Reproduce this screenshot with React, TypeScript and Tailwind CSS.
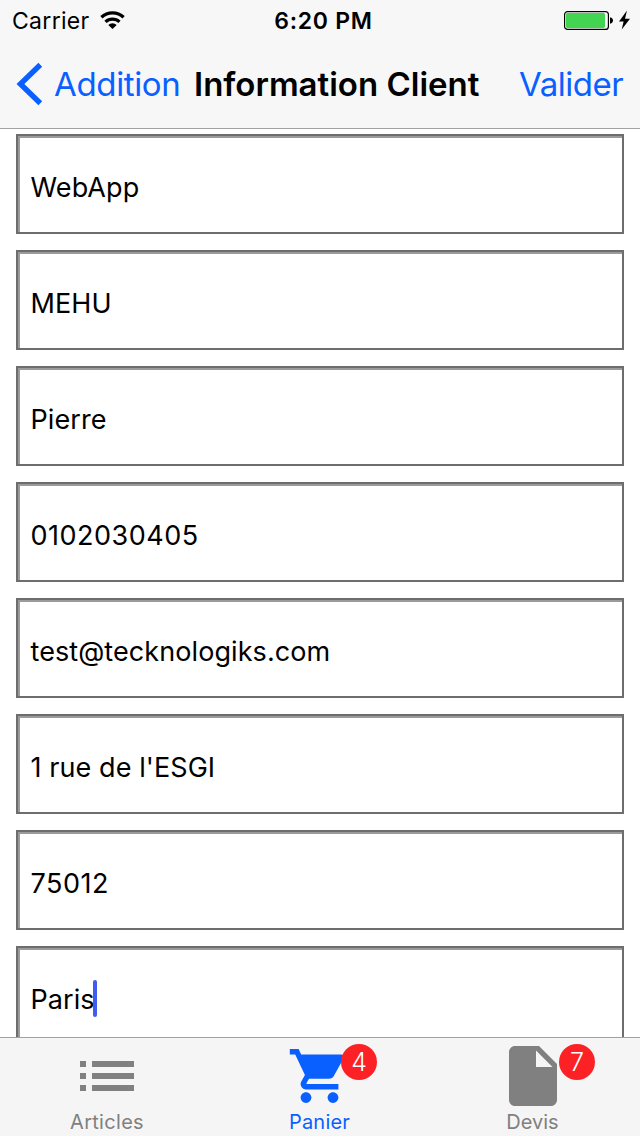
const fields = [
  'WebApp',
  'MEHU',
  'Pierre',
  '0102030405',
  'test@tecknologiks.com',
  "1 rue de l'ESGI",
  '75012',
  'Paris',
];

function StatusBar() {
  return (
    <div className="grid h-10 grid-cols-3 items-center">
      <div className="flex items-center pl-3">
        <span className="pt-0.5 text-[23px] leading-[38px] tracking-[0.3px]">Carrier</span>
        <svg className="ml-[10px]" width="25" height="18" viewBox="0 0 25 18">
          <path d="M.3 5.1a17.5 17.5 0 0 1 24.4 0l-2.2 2.4a14.3 14.3 0 0 0-20 0z" />
          <path d="M4.4 9.8a11.6 11.6 0 0 1 16.2 0l-2.2 2.3a8.4 8.4 0 0 0-11.8 0z" />
          <path d="M8.3 13.9a6.1 6.1 0 0 1 8.4 0L12.5 18z" />
        </svg>
      </div>
      <div className="pl-[7px] pt-0.5 text-center text-[23px] font-semibold leading-[38px] tracking-[0.7px]">6:20 PM</div>
      <div className="flex justify-end pr-[9px]">
        <svg width="67" height="20" viewBox="0 0 67 20">
          <rect x="0.6" y="1.6" width="43.8" height="17.8" rx="3" fill="#fff" stroke="#000" strokeWidth="1.2" />
          <rect x="2" y="3" width="39" height="15" rx="1.4" fill="#43d551" />
          <path d="M46 7.3c4 .4 4 6.1 0 6.5z" fill="#000" />
          <path d="M63 .5 55 11.5h4.6L57.7 19.5 66 8.8h-5z" fill="#000" />
        </svg>
      </div>
    </div>
  );
}

function NavBar() {
  return (
    <div className="flex h-[88px] items-center whitespace-nowrap">
      <svg className="ml-4" width="27" height="44" viewBox="0 0 27 44" fill="none">
        <path d="M24.3 2.7 4.4 22l19.9 19.3" stroke="#0a60ff" strokeWidth="5.4" />
      </svg>
      <span className="ml-[11px] w-[140px] text-[33px] leading-10 tracking-[-0.35px] text-[#0a60ff]">Addition</span>
      <span className="w-[325px] text-[33px] font-semibold leading-10 tracking-[0px]">Information Client</span>
      <span className="text-[33px] leading-10 tracking-[-0.45px] text-[#0a60ff]">Valider</span>
    </div>
  );
}

function Field({ value, focused }: { value: string; focused: boolean }) {
  const numeric = /^\d+$/.test(value);
  return (
    <div className="h-[100px] shrink-0 border-2 border-[#6d6d6d]">
      <div className="flex h-full items-center border-l-2 border-t-2 border-[#9b9b9b] pl-[10.5px] pt-1">
        <span className={numeric ? 'pt-0.5 text-[27px] leading-9 tracking-[0.5px]' : 'pt-0.5 text-[27px] leading-9 tracking-[0.08px]'}>
          {value}
        </span>
        {focused && <span className="-ml-[2px] mb-0.5 h-[37px] w-1 rounded-full bg-[#405bee]" />}
      </div>
    </div>
  );
}

function Badge({ count, position }: { count: number; position: string }) {
  return (
    <span
      className={`absolute top-[6px] flex size-9 items-center justify-center rounded-full bg-[#fc2125] text-[25px] font-light text-white ${position}`}
    >
      {count}
    </span>
  );
}

function TabBar() {
  return (
    <nav className="flex h-[99px] shrink-0 border-t border-[#a2a2a2] bg-[#f5f5f5] text-[20px] leading-6 text-[#808080]">
      <div className="flex w-[213px] flex-col items-center">
        <svg className="h-[72px]" width="54" height="72" viewBox="0 0 54 72" fill="#808080">
          <path d="M0 23h6v6H0zM12 23h42v6H12zM0 35h6v6H0zM12 35h42v6H12zM0 47h6v6H0zM12 47h42v6H12z" />
        </svg>
        <span className="pl-px tracking-[0.3px]">Articles</span>
      </div>
      <div className="relative flex w-[213px] flex-col items-center text-[#0a60ff]">
        <svg className="h-[72px]" width="65" height="72" viewBox="0 -2.07 24 26.67" fill="#0a60ff">
          <path d="M7 18c-1.1 0-1.99.9-1.99 2S5.9 22 7 22s2-.9 2-2-.9-2-2-2zM1 2v2h2l3.6 7.59-1.35 2.45c-.16.28-.25.61-.25.96 0 1.1.9 2 2 2h12v-2H7.42c-.14 0-.25-.11-.25-.25l.03-.12.9-1.63h7.45c.75 0 1.41-.41 1.75-1.03l3.58-6.49c.08-.14.12-.31.12-.48 0-.55-.45-1-1-1H5.21l-.94-2H1zm16 16c-1.1 0-1.99.9-1.99 2s.89 2 1.99 2 2-.9 2-2-.9-2-2-2z" />
        </svg>
        <span className="tracking-[0.2px]">Panier</span>
        <Badge count={4} position="left-[128px]" />
      </div>
      <div className="relative flex w-[213px] flex-col items-center">
        <svg width="72" height="72" viewBox="0 -0.67 24 24" fill="#808080">
          <path d="M6 2c-1.1 0-1.99.9-1.99 2L4 20c0 1.1.89 2 1.99 2H18c1.1 0 2-.9 2-2V8l-6-6H6zm7 7V3.5L18.5 9H13z" />
        </svg>
        <span>Devis</span>
        <Badge count={7} position="left-[133px]" />
      </div>
    </nav>
  );
}

export default function App() {
  return (
    <div className="flex h-[1136px] w-[640px] flex-col overflow-hidden bg-white font-['Inter',sans-serif] text-black">
      <header className="h-[129px] shrink-0 border-b border-[#a2a2a2] bg-[#f7f7f7]">
        <StatusBar />
        <NavBar />
      </header>
      <main className="flex min-h-0 flex-1 flex-col gap-4 overflow-hidden px-4 pt-[5px]">
        {fields.map((value, index) => (
          <Field key={value} value={value} focused={index === fields.length - 1} />
        ))}
      </main>
      <TabBar />
    </div>
  );
}
